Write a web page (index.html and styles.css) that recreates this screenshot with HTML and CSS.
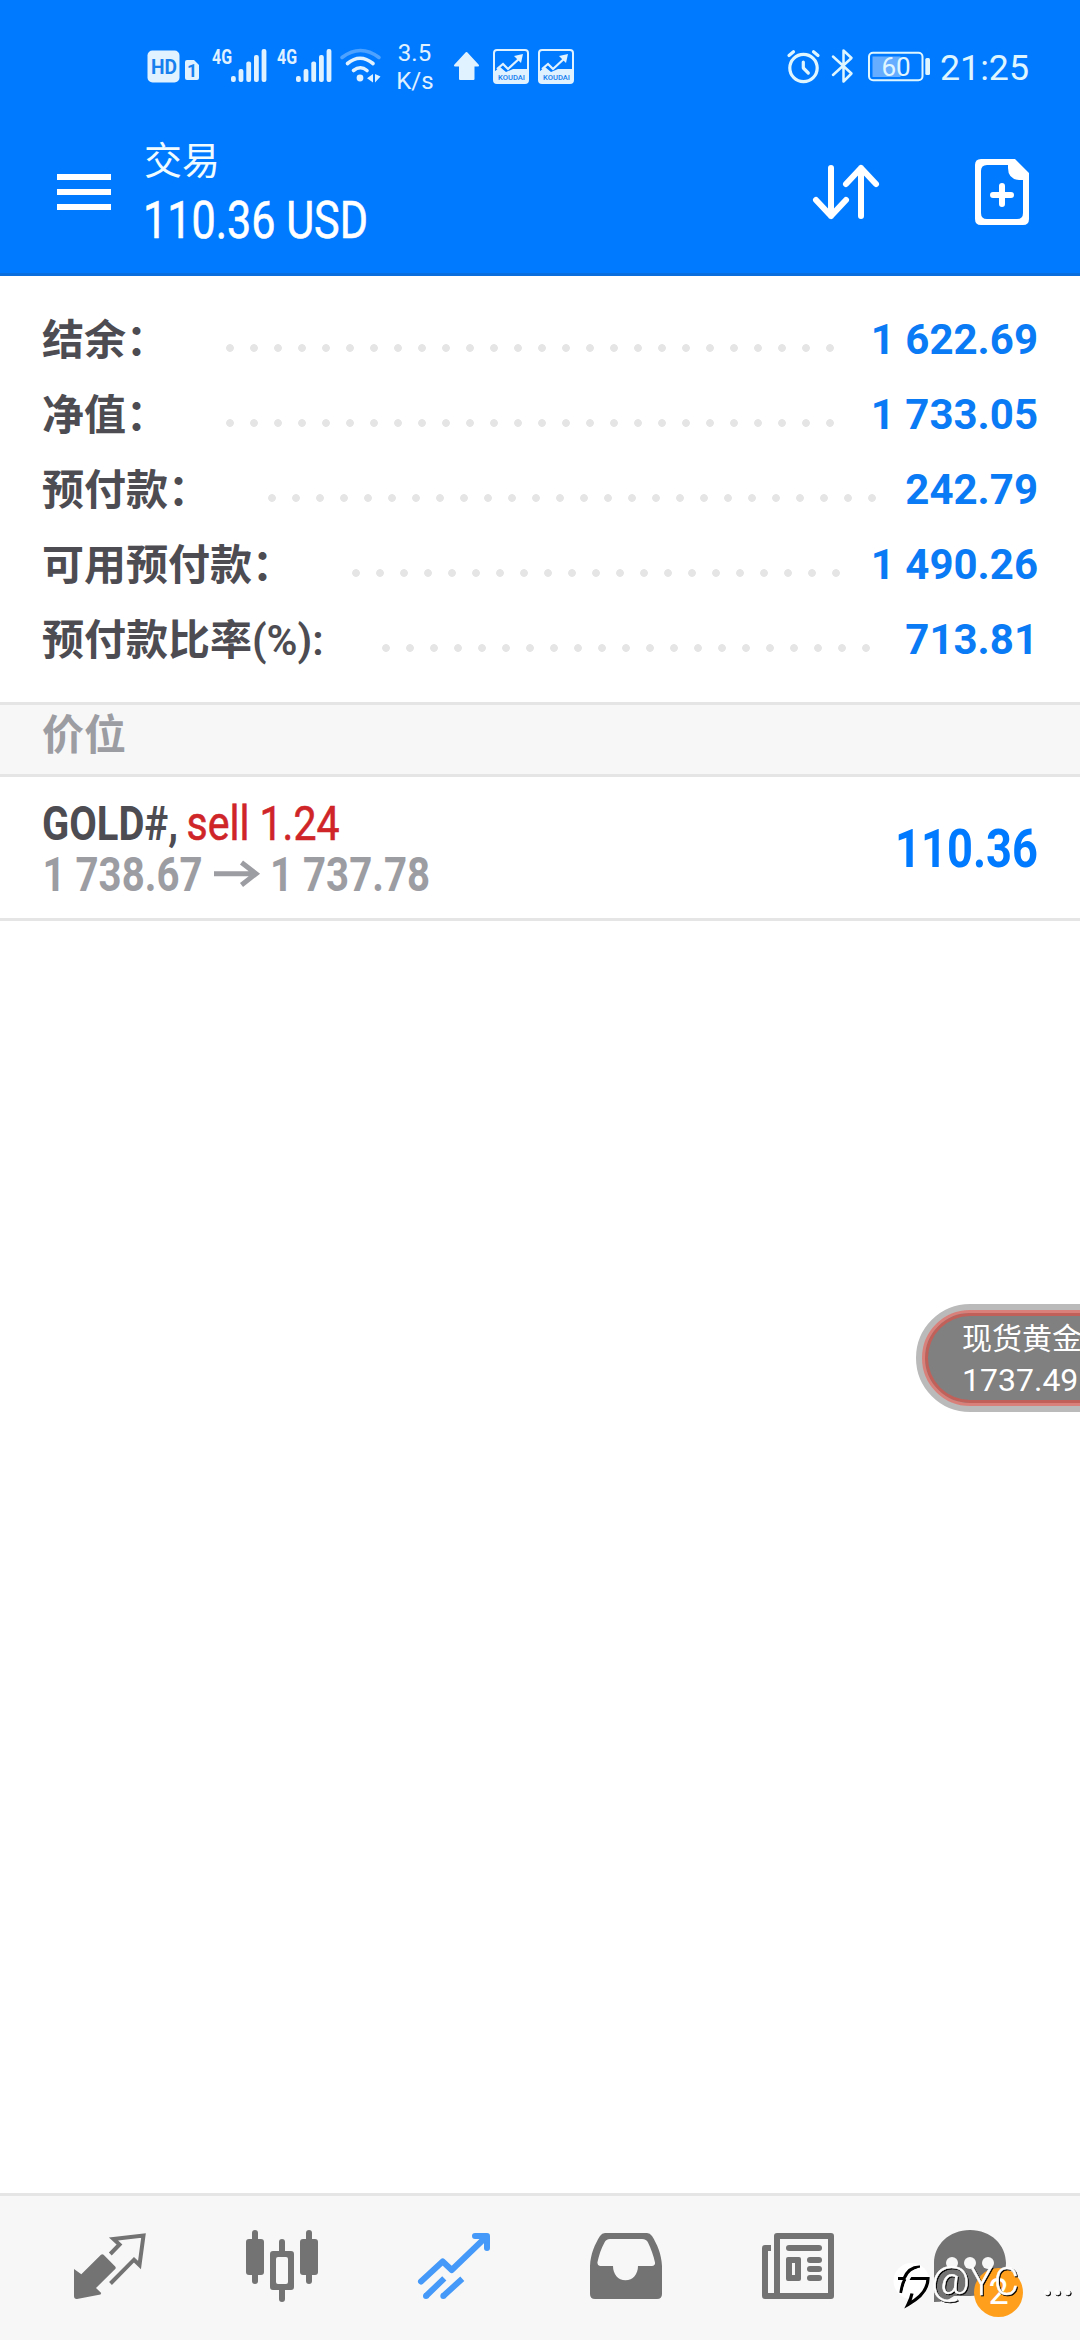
FILE: index.html
```html
<!DOCTYPE html>
<html lang="zh-CN">
<head>
<meta charset="utf-8">
<title>交易</title>
<link rel="stylesheet" href="styles.css">
</head>
<body>
<div class="screen">
  <header class="top">
    <div class="status">
      <svg class="status-left" width="450" height="130" viewBox="140 0 450 130">
        <g class="st">
          <rect x="147.500" y="50.500" width="32" height="32" rx="5"/>
          <path d="M185 62q0-2 2-2h7l5 5v13q0 2-2 2h-10q-2 0-2-2z"/>
          <text class="t-hd" x="151" y="74" textLength="26" lengthAdjust="spacingAndGlyphs">HD</text>
          <text class="t-sim" x="187" y="77">1</text>
          <g id="signal">
            <text class="t-4g" x="212" y="63.500" textLength="20" lengthAdjust="spacingAndGlyphs">4G</text>
            <rect x="231" y="76" width="4.800" height="6" rx="2"/>
            <rect x="238.600" y="69" width="4.800" height="13" rx="2"/>
            <rect x="246.300" y="61.500" width="4.800" height="20.500" rx="2"/>
            <rect x="254" y="55" width="4.800" height="27" rx="2"/>
            <rect x="261.600" y="49" width="4.800" height="33" rx="2"/>
          </g>
          <use href="#signal" x="65"/>
          <circle cx="360" cy="78" r="3.400"/>
          <path d="M373 74v8.500l-6-4.200zM375 74v8.500l5.500-6z"/>
        </g>
        <g class="st-line">
          <path d="M353.500 70.500q7-5.500 13.500 0M347.500 63.500q12.500-10.500 25.500 0"/>
          <path class="dim" d="M342 57.500q18.500-14 37 0"/>
        </g>
        <text class="t-speed" x="414.500" y="61">3.5</text>
        <text class="t-speed" x="415" y="89">K/s</text>
        <path class="st" stroke="#e0f1ff" stroke-width="2" stroke-linejoin="round" d="M466.500 53l11.500 12.500h-4.500v13.500h-13.500v-13.500h-5z"/>
        <g id="koudai">
          <rect x="494" y="50" width="34" height="33" rx="3" fill="none" stroke="#e0f1ff" stroke-width="2"/>
          <path class="st" d="M494 72l6-5 6 5 7-3h15v14h-34z"/>
          <path d="M497 69l6-5 5 5 13-12" fill="none" stroke="#e0f1ff" stroke-width="2.200"/>
          <path class="st" d="M514 56l9-2-2 9z"/>
          <text class="t-kd" x="498" y="80" textLength="27" lengthAdjust="spacingAndGlyphs">KOUDAI</text>
        </g>
        <use href="#koudai" x="45"/>
      </svg>
      <svg class="status-right" width="260" height="130" viewBox="780 0 260 130">
        <g fill="none" stroke="#e0f6ff" stroke-linecap="round" stroke-linejoin="round">
          <circle cx="803.500" cy="68" r="13.700" stroke-width="3.200"/>
          <path stroke-width="3.200" d="M803.300 62v6l5 5M789 55.500l4.500-3.800M818 55.500l-4.500-3.800"/>
          <path stroke-width="2.500" d="M833 56.500l18.500 17-8 8v-31l8 7.500-18.500 17"/>
          <rect x="869" y="52.800" width="53.500" height="27.500" rx="4" stroke-width="2"/>
        </g>
        <rect x="872.500" y="56.500" width="28" height="20.500" fill="#66adff"/>
        <rect x="925.300" y="58" width="4.700" height="17" rx="1.500" fill="#e0f6ff"/>
        <text class="t-bat" x="896" y="76">60</text>
        <text class="t-time" x="940" y="80" textLength="89" lengthAdjust="spacingAndGlyphs">21:25</text>
      </svg>
    </div>
    <div class="bar">
      <svg class="menu" width="54" height="36" viewBox="0 0 54 36"><path d="M0 3h54M0 18h54M0 33h54" stroke="#fff" stroke-width="6"/></svg>
      <div class="titles">
        <div class="title">交易</div>
        <svg class="amount" width="240" height="50"><text x="-1" y="43" textLength="225" lengthAdjust="spacingAndGlyphs">110.36 USD</text></svg>
      </div>
      <svg class="sort" width="66" height="54" viewBox="813 165 66 54"><path d="M831 168v48M816 200l15 16 15-16M861 216v-48M846 184l15-16 15 16" fill="none" stroke="#fff" stroke-width="6" stroke-linecap="round" stroke-linejoin="round"/></svg>
      <svg class="new" width="54" height="66" viewBox="975 159 54 66">
        <path fill="#fff" fill-rule="evenodd" d="M981 159h34l14 14v46q0 6-6 6h-42q-6 0-6-6v-54q0-6 6-6zM987 165q-6 0-6 6v42q0 6 6 6h30q6 0 6-6v-33h-4q-11-1-11-12v-3z"/>
        <path d="M993 195h18M1002 186v18" stroke="#fff" stroke-width="6" stroke-linecap="round"/>
      </svg>
    </div>
  </header>

  <section class="account">
    <div class="row"><span class="label">结余：</span><span class="dots n26"></span><span class="value">1 622.69</span></div>
    <div class="row"><span class="label">净值：</span><span class="dots n26"></span><span class="value">1 733.05</span></div>
    <div class="row"><span class="label">预付款：</span><span class="dots n26"></span><span class="value">242.79</span></div>
    <div class="row"><span class="label">可用预付款：</span><span class="dots n21"></span><span class="value">1 490.26</span></div>
    <div class="row"><span class="label">预付款比率<span class="latin">(%):</span></span><span class="dots n21"></span><span class="value">713.81</span></div>
  </section>

  <h2 class="section">价位</h2>

  <article class="position">
    <svg class="deal" width="400" height="141" viewBox="42 777 400 141">
      <text class="symbol" x="42" y="840" textLength="136" lengthAdjust="spacingAndGlyphs">GOLD#,</text>
      <text class="side" x="186.500" y="840" textLength="153" lengthAdjust="spacingAndGlyphs">sell 1.24</text>
      <text class="quote" x="42.500" y="891" textLength="160" lengthAdjust="spacingAndGlyphs">1 738.67</text>
      <path d="M214 873.700h42M241.500 862.500l14.500 11.200-14.500 11.200" fill="none" stroke="#9c9ca3" stroke-width="5"/>
      <text class="quote" x="270" y="891" textLength="160" lengthAdjust="spacingAndGlyphs">1 737.78</text>
    </svg>
    <svg class="profit" width="150" height="141" viewBox="888 777 150 141">
      <text x="895" y="867" textLength="143" lengthAdjust="spacingAndGlyphs">110.36</text>
    </svg>
  </article>

  <main class="blank"></main>

  <aside class="ticker">
    <div class="ticker-in">
      <span class="ticker-name">现货黄金</span>
      <span class="ticker-price">1737.49</span>
    </div>
  </aside>

  <nav class="tabs">
    <div class="tab">
      <svg width="72" height="72">
        <path d="M0 37L7.300 42.300 27 22.800Q28.300 21.500 29.600 22.800L41.200 34.400Q42.300 35.700 41.200 37L22 56 27.200 61 26.500 62.500 3 67Q0 67.200 0 64z" fill="#737373"/>
        <path d="M36.300 22L45.500 12.500 39.500 7 69.500 3.500 65.500 33 60 27.700 36.500 51.500" fill="none" stroke="#737373" stroke-width="4"/>
      </svg>
    </div>
    <div class="tab">
      <svg width="72" height="72" fill="#737373">
        <rect x="6" y="-2" width="6" height="54" rx="3"/><rect y="7" width="18" height="36" rx="3"/>
        <rect x="60" y="-2" width="6" height="54" rx="3"/><rect x="54" y="7" width="18" height="36" rx="3"/>
        <rect x="33" y="7" width="6" height="16" rx="3"/><rect x="33" y="54" width="6" height="16" rx="3"/>
        <path fill-rule="evenodd" d="M27 19h18q3 0 3 3v33q0 3-3 3H27q-3 0-3-3V22q0-3 3-3zM32 25q-2 0-2 2v23q0 2 2 2h8q2 0 2-2V27q0-2-2-2z"/>
      </svg>
    </div>
    <div class="tab">
      <svg width="72" height="72" fill="none" stroke="#4599f8" stroke-width="6" stroke-linejoin="round">
        <path stroke-linecap="round" d="M3 49.500L24.700 29.500 33.700 38 68 5M57 4h12v12"/>
        <path d="M8 64L26.300 46.300M25.300 64L44.300 46.700"/>
        <circle cx="8" cy="64" r="3" fill="#4599f8" stroke="none"/><circle cx="25.300" cy="64" r="3" fill="#4599f8" stroke="none"/>
      </svg>
    </div>
    <div class="tab">
      <svg width="72" height="72">
        <path fill="#737373" fill-rule="evenodd" d="M0 34C.5 22 5 12 10 4Q12 1 15 1H57Q60 1 62 4C67 12 71.500 22 72 34V62Q72 67 67 67H5Q0 67 0 62zM10 34H23C23 42 28 48.300 35.500 48.300S48 42 48 34H62Q65.500 33.500 65 30.500C63.500 23 61 17 58 10.500Q56.500 7 52 7H20Q16 7 14.500 10.500C11 17 9 23 7.500 30Q7 33.500 10 34z"/>
      </svg>
    </div>
    <div class="tab">
      <svg width="72" height="72" fill="#737373">
        <path d="M15 4h54v60H15zM9 16H3v48h12" fill="none" stroke="#737373" stroke-width="6" stroke-linejoin="round"/>
        <rect x="24" y="13" width="36" height="6" rx="3"/>
        <path fill-rule="evenodd" d="M26 25h11q2 0 2 2v20q0 2-2 2H26q-2 0-2-2V27q0-2 2-2zM30 31v12h3V31z"/>
        <rect x="45" y="25" width="15" height="6" rx="3"/><rect x="45" y="34" width="15" height="6" rx="3"/><rect x="45" y="43" width="15" height="6" rx="3"/>
      </svg>
    </div>
    <div class="tab">
      <svg width="72" height="72">
        <path fill="#737373" d="M36-2C57-2 72 13 72 31S57 64 36 64H20Q12 70 0 70V31C0 13 15-2 36-2z"/>
        <g fill="#f7f7f7"><circle cx="18" cy="31" r="6"/><circle cx="36" cy="31" r="6"/><circle cx="54" cy="31" r="6"/></g>
      </svg>
      <span class="badge">2</span>
    </div>
  </nav>

  <svg class="mark" width="190" height="70" viewBox="890 2250 190 70">
    <circle cx="911.500" cy="2281" r="18" fill="#fff"/>
    <path d="M898 2278.500h6q5-12 16-11.500M908 2278.500h20q0 15-20 26 3-6 4-11M905 2279q-3 5-4 14" fill="none" stroke="#000" stroke-width="3.200"/>
    <path d="M903 2296q5-26 18-27" fill="none" stroke="#fff" stroke-width="3"/>
    <g class="mark-text">
      <text x="931" y="2293.500" textLength="39" lengthAdjust="spacingAndGlyphs">@</text>
      <text x="970" y="2294.500">Y</text>
      <text x="994" y="2294.500">C</text>
      <text class="more" x="1042" y="2294.500" textLength="31">...</text>
    </g>
  </svg>
</div>
</body>
</html>
```
FILE: styles.css
```css
* { box-sizing: border-box; }
body { margin: 0; background: #fff; font-family: Roboto, "Noto Sans CJK SC", sans-serif; }
svg { display: block; overflow: visible; flex: none; }
.screen { position: relative; width: 1080px; height: 2340px; display: flex; flex-direction: column; overflow: hidden; }

.top { height: 276px; background: #007aff; border-bottom: 3px solid #0a6edd; }
.status { height: 130px; display: flex; justify-content: space-between; padding: 0 40px 0 140px; }
.st { fill: #e0f1ff; }
.st-line { fill: none; stroke: #e0f1ff; stroke-width: 3.6; stroke-linecap: round; }
.dim { stroke: #4da2ff; }
.t-hd { font-size: 21px; font-weight: 700; fill: #1680ee; }
.t-sim { font-size: 18px; font-weight: 700; fill: #1680ee; }
.t-4g { font-size: 20px; font-weight: 700; }
.t-speed { font-size: 24px; fill: #e0f1ff; text-anchor: middle; }
.t-kd { font-size: 8px; font-weight: 500; fill: #1680ee; }
.t-bat { font-size: 26px; fill: #e0f6ff; text-anchor: middle; }
.t-time { font-size: 35.500px; fill: #e0f6ff; }

.bar { height: 143px; display: flex; align-items: flex-start; padding: 0 51px 0 57px; }
.menu { margin-top: 44px; }
.titles { margin-left: 33px; width: 300px; }
.title { height: 65px; padding-top: 4px; font-size: 38px; line-height: 54px; color: #f0fcff; }
.amount text { font-size: 51px; fill: #fff; stroke: #fff; stroke-width: .6px; }
.sort { margin: 35px 96px 0 auto; }
.new { margin-top: 29px; }

.account { height: 426px; padding: 26px 42px 0; }
.row { height: 75px; display: flex; align-items: center; font-size: 42px; line-height: 75px; font-weight: 700; }
.label { padding-top: 2px; color: #4d4c52; white-space: nowrap; }
.latin { font-weight: 600; }
.dots { height: 8px; margin: 16px 0 0 50px; background: radial-gradient(circle at 12px 4px, #e5e5e5 3.500px, transparent 4.200px) 0 0 / 24px 8px repeat-x; }
.n26 { width: 624px; }
.n21 { width: 504px; }
.value { margin-left: auto; color: #0a7af5; white-space: pre; }

.section { margin: 0; height: 75px; padding-left: 42px; border: solid #e5e5e5; border-width: 3px 0; background: #f7f7f7; color: #9c9ca3; font-size: 42px; line-height: 61px; font-weight: 700; }

.position { height: 144px; display: flex; justify-content: space-between; padding: 0 42px; border-bottom: 3px solid #e5e5e5; }
.deal text { font-size: 48px; font-weight: 700; }
.deal .symbol { fill: #4d4c52; }
.deal .side { fill: #cf2428; font-weight: 400; stroke: #cf2428; stroke-width: .6px; }
.deal .quote { fill: #9c9ca3; }
.profit text { font-size: 54px; font-weight: 700; fill: #007aff; }

.blank { flex: 1; }

.ticker { position: absolute; left: 916px; top: 1304px; width: 260px; height: 108px; border-radius: 54px; border: 6px solid #bababa; background: #bababa; }
.ticker-in { height: 96px; border-radius: 48px; border: 3px solid #d9807a; background: #808080; box-shadow: inset 0 0 0 3px #c06059; padding: 2px 0 0 37px; display: flex; flex-direction: column; color: #fff; white-space: nowrap; }
.ticker-name { font-size: 30px; line-height: 48px; }
.ticker-price { font-size: 32px; line-height: 34px; }

.tabs { height: 147px; display: flex; padding: 0 24px; border-top: 3px solid #e5e5e5; background: #f7f7f7; }
.tab { position: relative; flex: 1; display: flex; align-items: center; justify-content: center; }
.badge { position: absolute; left: 90px; top: 72px; width: 49px; height: 49px; border-radius: 50%; background: #ff9f1c; color: #fff; font-size: 36px; line-height: 49px; text-align: center; }

.mark { position: absolute; left: 890px; top: 2250px; }
.mark-text { font-size: 38px; font-weight: 300; fill: #fff; stroke: #fff; stroke-width: .5px; filter: drop-shadow(1.500px 1.500px 0 #000); }
.more { font-weight: 500; }
```
